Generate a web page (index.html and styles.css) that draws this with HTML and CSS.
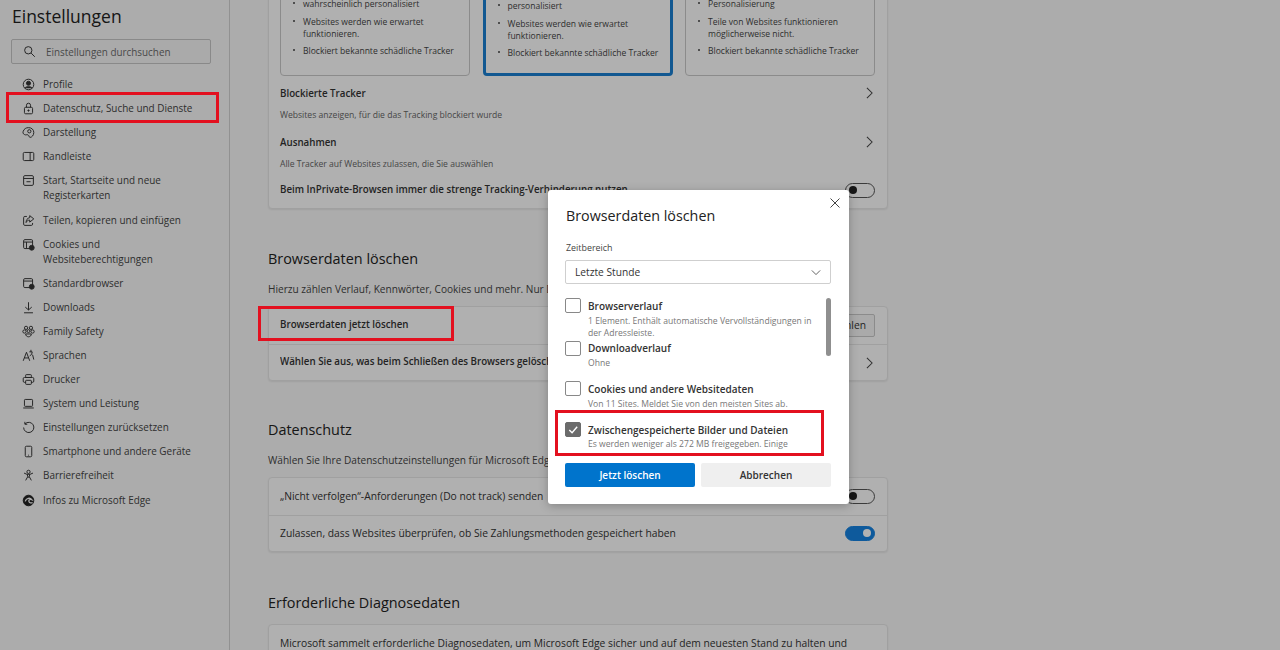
FILE: index.html
```html
<!DOCTYPE html>
<html lang="de">
<head>
  <meta charset="UTF-8">
  <title>Einstellungen</title>
  <link rel="stylesheet" href="styles.css">
</head>
<body>
  <div class="screen">
    <aside class="sidebar">
      <h1>Einstellungen</h1>
      <div class="search">
        <svg class="ico" viewBox="0 0 16 16"><circle cx="6.5" cy="6.5" r="4.5"/><path d="M10 10l4.5 4.5"/></svg>
        <span>Einstellungen durchsuchen</span>
      </div>
      <nav class="nav">
        <a><svg class="ico" viewBox="0 0 16 16"><circle cx="8" cy="8" r="6.5"/><circle cx="8" cy="6.5" r="2.5" class="fill"/><path d="M3.5 12.5c1-2.5 8-2.5 9 0" class="fill"/></svg><span>Profile</span></a>
        <a><svg class="ico" viewBox="0 0 16 16"><rect x="3" y="6.5" width="10" height="8" rx="1.5"/><path d="M5.5 6.5V4a2.5 2.5 0 015 0v2.5"/><circle cx="8" cy="10.5" r=".8" class="fill"/></svg><span>Datenschutz, Suche und Dienste</span></a>
        <a><svg class="ico" viewBox="0 0 16 16"><path d="M8 2c4 0 6.5 2.6 6.5 6 0 3.5-2.5 6-4.5 6-1.5 0-1-2-2.5-3-1.5-.8-3 .5-4.500-.5C1 9.500 1 8 1.500 6.500 2.500 3.500 5 2 8 2z"/><circle cx="9" cy="6.5" r="2"/></svg><span>Darstellung</span></a>
        <a><svg class="ico" viewBox="0 0 16 16"><rect x="1.5" y="3" width="13" height="10" rx="1.5"/><path d="M10 3v10"/></svg><span>Randleiste</span></a>
        <a><svg class="ico" viewBox="0 0 16 16"><rect x="2" y="2" width="12" height="12" rx="1.5"/><path d="M2 5.5h12M5.5 9.5h5"/></svg><span>Start, Startseite und neue<br>Registerkarten</span></a>
        <a><svg class="ico" viewBox="0 0 16 16"><path d="M6 3H3.5A1.5 1.5 0 002 4.5v8A1.5 1.5 0 003.5 14h8a1.5 1.5 0 001.5-1.5V11"/><path d="M9.5 2l5 4-5 4V7.500c-2 0-3.500 1-4.500 3 0-3 1.500-5.500 4.500-6z"/></svg><span>Teilen, kopieren und einfügen</span></a>
        <a><svg class="ico" viewBox="0 0 16 16"><rect x="2" y="2" width="11" height="11" rx="1.5"/><path d="M2 5h11M5.5 5v8"/><circle cx="12" cy="12" r="3" class="fill"/></svg><span>Cookies und<br>Websiteberechtigungen</span></a>
        <a><svg class="ico" viewBox="0 0 16 16"><rect x="2" y="2" width="11" height="11" rx="1.5"/><path d="M2 5h11"/><circle cx="12" cy="12" r="3" class="fill"/></svg><span>Standardbrowser</span></a>
        <a><svg class="ico" viewBox="0 0 16 16"><path d="M8 1.5V11M4 7.5L8 11l4-3.5M2.500 14.500h11"/></svg><span>Downloads</span></a>
        <a><svg class="ico" viewBox="0 0 16 16"><circle cx="5" cy="3.5" r="2"/><circle cx="11" cy="3.5" r="2"/><circle cx="3" cy="8" r="2"/><circle cx="13" cy="8" r="2"/><circle cx="8" cy="7.5" r="1.8"/><path d="M4.5 11h7c0 2-1.500 3.500-3.500 3.500S4.500 13 4.500 11z"/></svg><span>Family Safety</span></a>
        <a><svg class="ico" viewBox="0 0 16 16"><path d="M1.5 14.5L5.5 4l4 10.500M3 11h5M9 3.500h3.500c0 2-1 4-3 5M11 1v2.500M13 7l1.500 6"/></svg><span>Sprachen</span></a>
        <a><svg class="ico" viewBox="0 0 16 16"><rect x="4.5" y="2" width="7" height="3.5" rx=".8"/><path d="M4.500 11.500H3A1.500 1.500 0 011.500 10V7A1.500 1.500 0 013 5.500h10A1.500 1.500 0 0114.500 7v3a1.500 1.500 0 01-1.500 1.500h-1.500"/><rect x="4.5" y="9" width="7" height="5" rx=".8"/></svg><span>Drucker</span></a>
        <a><svg class="ico" viewBox="0 0 16 16"><rect x="3" y="3" width="10" height="8.5" rx="1"/><path d="M1.5 13.5h13"/></svg><span>System und Leistung</span></a>
        <a><svg class="ico" viewBox="0 0 16 16"><path d="M3.8 3.5A6.300 6.300 0 112 8"/><path d="M3.5 1v3h3"/></svg><span>Einstellungen zurücksetzen</span></a>
        <a><svg class="ico" viewBox="0 0 16 16"><rect x="4" y="1.5" width="8" height="13" rx="1.5"/><path d="M7.5 12.5h1"/></svg><span>Smartphone und andere Geräte</span></a>
        <a><svg class="ico" viewBox="0 0 16 16"><circle cx="8" cy="3.5" r="2"/><path d="M2.5 5l3.500 1.500h4L13.500 5M6.500 6.500l.5 3-2.500 4.500M9.500 6.500l-.5 3 2.500 4.500M7 10h2"/></svg><span>Barrierefreiheit</span></a>
        <a><svg class="ico" viewBox="0 0 16 16"><circle cx="8" cy="8" r="6.5" class="solid"/><path d="M4 9c1-4 6-5 8-2-2-1-4 0-3.500 2s3 2.500 4.500 1.500" class="cut"/></svg><span>Infos zu Microsoft Edge</span></a>
      </nav>
    </aside>

    <main class="main">
      <section class="card tracking">
        <div class="levels">
          <div class="level">
            <ul>
              <li>wahrscheinlich personalisiert</li>
              <li>Websites werden wie erwartet funktionieren.</li>
              <li>Blockiert bekannte schädliche Tracker</li>
            </ul>
          </div>
          <div class="level selected">
            <ul>
              <li>personalisiert</li>
              <li>Websites werden wie erwartet funktionieren.</li>
              <li>Blockiert bekannte schädliche Tracker</li>
            </ul>
          </div>
          <div class="level">
            <ul>
              <li>Personalisierung</li>
              <li>Teile von Websites funktionieren möglicherweise nicht.</li>
              <li>Blockiert bekannte schädliche Tracker</li>
            </ul>
          </div>
        </div>
        <div class="link-row">
          <div><strong>Blockierte Tracker</strong><small>Websites anzeigen, für die das Tracking blockiert wurde</small></div>
          <svg class="chev" viewBox="0 0 10 14"><path d="M2 1l6 6-6 6"/></svg>
        </div>
        <div class="link-row">
          <div><strong>Ausnahmen</strong><small>Alle Tracker auf Websites zulassen, die Sie auswählen</small></div>
          <svg class="chev" viewBox="0 0 10 14"><path d="M2 1l6 6-6 6"/></svg>
        </div>
        <div class="link-row last">
          <strong>Beim InPrivate-Browsen immer die strenge Tracking-Verhinderung nutzen</strong>
          <span class="toggle"></span>
        </div>
      </section>

      <h2 class="clear-head">Browserdaten löschen</h2>
      <p class="desc">Hierzu zählen Verlauf, Kennwörter, Cookies und mehr. Nur Daten aus diesem Profil werden gelöscht.</p>
      <section class="card">
        <div class="row">
          <strong>Browserdaten jetzt löschen</strong>
          <button class="pick">Auswählen</button>
        </div>
        <div class="row">
          <strong class="cut-off">Wählen Sie aus, was beim Schließen des Browsers gelöscht werden soll</strong>
          <svg class="chev" viewBox="0 0 10 14"><path d="M2 1l6 6-6 6"/></svg>
        </div>
      </section>

      <h2 class="privacy-head">Datenschutz</h2>
      <p class="desc">Wählen Sie Ihre Datenschutzeinstellungen für Microsoft Edge aus.</p>
      <section class="card">
        <div class="row">
          <span>„Nicht verfolgen“-Anforderungen (Do not track) senden</span>
          <span class="toggle"></span>
        </div>
        <div class="row">
          <span>Zulassen, dass Websites überprüfen, ob Sie Zahlungsmethoden gespeichert haben</span>
          <span class="toggle on"></span>
        </div>
      </section>

      <h2 class="diag-head">Erforderliche Diagnosedaten</h2>
      <section class="card">
        <div class="row">
          <span>Microsoft sammelt erforderliche Diagnosedaten, um Microsoft Edge sicher und auf dem neuesten Stand zu halten und</span>
        </div>
      </section>
    </main>

    <div class="dim"></div>

    <div class="dialog">
      <svg class="close" viewBox="0 0 12 12"><path d="M1.5 1.5l9 9M10.5 1.5l-9 9"/></svg>
      <h3>Browserdaten löschen</h3>
      <label class="range-label">Zeitbereich</label>
      <div class="select">
        <span>Letzte Stunde</span>
        <svg viewBox="0 0 12 8"><path d="M1 1.5l5 5 5-5"/></svg>
      </div>
      <div class="options">
        <div class="option">
          <span class="box"></span>
          <div><b>Browserverlauf</b><small>1 Element. Enthält automatische Vervollständigungen in der Adressleiste.</small></div>
        </div>
        <div class="option download">
          <span class="box"></span>
          <div><b>Downloadverlauf</b><small>Ohne</small></div>
        </div>
        <div class="option cookies">
          <span class="box"></span>
          <div><b>Cookies und andere Websitedaten</b><small>Von 11 Sites. Meldet Sie von den meisten Sites ab.</small></div>
        </div>
        <div class="option cache">
          <span class="box checked"><svg viewBox="0 0 14 14"><path d="M3 7.5l3 3 5.5-6.5"/></svg></span>
          <div><b>Zwischengespeicherte Bilder und Dateien</b><small>Es werden weniger als 272 MB freigegeben. Einige</small></div>
        </div>
        <span class="thumb"></span>
      </div>
      <div class="actions">
        <button class="primary">Jetzt löschen</button>
        <button class="secondary">Abbrechen</button>
      </div>
    </div>

    <div class="mark mark-nav"></div>
    <div class="mark mark-row"></div>
    <div class="mark mark-cache"></div>
  </div>
</body>
</html>
```

FILE: styles.css
```css
* { box-sizing: border-box; }
html, body { margin: 0; padding: 0; }

body {
  background: #f7f7f7;
  font-family: "Open Sans", "Noto Sans", Arial, sans-serif;
  color: #333;
  overflow: hidden;
}

.screen {
  position: relative;
  display: flex;
  width: 1280px;
  height: 650px;
  overflow: hidden;
}

/* Sidebar */
.sidebar {
  flex: 0 0 230px;
  border-right: 1px solid #d0d0d0;
  padding: 4px 18px 0 11px;
}

.sidebar h1 {
  margin: 0 0 11px 1px;
  font-size: 17.5px;
  line-height: 24px;
  font-weight: 400;
  color: #222;
}

.search {
  display: flex;
  align-items: center;
  gap: 10px;
  height: 25px;
  padding-left: 11px;
  border: 1px solid #c4c4c4;
  border-radius: 2px;
  background: #f4f4f4;
  font-size: 9.9px;
  color: #6a6a6a;
}

.ico {
  flex: none;
  width: 13px;
  height: 13px;
  fill: none;
  stroke: #333;
  stroke-width: 1.2;
}
.ico .fill { fill: #333; }
.ico .solid { fill: #222; stroke: #222; }
.ico .cut { stroke: #f7f7f7; stroke-width: 1.6; }

.nav { margin-top: 8.5px; }

.nav a {
  display: flex;
  align-items: flex-start;
  gap: 8px;
  padding: 4.56px 0 4.56px 11px;
  font-size: 9.93px;
  line-height: 15px;
  color: #444;
}
.nav .ico { margin-top: 1px; }

/* Main column */
.main {
  flex: 0 0 620px;
  margin-left: 38px;
  margin-top: -56px;
}

.card {
  border: 1px solid #e6e6e6;
  border-radius: 4px;
  background: #fcfcfc;
  box-shadow: 0 1px 2px rgba(0,0,0,.08);
  font-size: 10.3px;
}

.tracking { padding: 0 12px 0 11px; height: 265px; }

.levels {
  display: flex;
  justify-content: space-between;
  height: 131px;
}

.level {
  width: 190px;
  padding: 52px 4px 0 12px;
  border: 1px solid #c8c8c8;
  border-radius: 4px;
}
.level.selected { border: 3px solid #1a7fd0; }

.level ul { margin: 0; padding: 0; list-style: none; }
.level li {
  position: relative;
  padding-left: 10px;
  margin-bottom: 5.5px;
  font-size: 8.55px;
  line-height: 12px;
  color: #444;
}
.level li::before {
  content: "";
  position: absolute;
  left: 0;
  top: 4px;
  width: 2px;
  height: 2px;
  border-radius: 50%;
  background: #444;
}

.link-row {
  display: flex;
  justify-content: space-between;
  align-items: flex-start;
  height: 48.5px;
  padding-top: 10px;
}
.link-row.last { align-items: center; padding-top: 0; height: 34px; }

.link-row strong, .row strong { font-weight: 600; font-size: 9.75px; line-height: 14px; color: #333; }
.link-row small {
  display: block;
  margin-top: 8px;
  font-size: 8.6px;
  line-height: 12px;
  color: #666;
}

.chev {
  flex: none;
  width: 9px;
  height: 12px;
  fill: none;
  stroke: #444;
  stroke-width: 1.2;
  margin: 1px 1px 0 0;
}

.toggle {
  flex: none;
  position: relative;
  width: 30px;
  height: 15px;
  border: 1px solid #555;
  border-radius: 8px;
}
.toggle::after {
  content: "";
  position: absolute;
  left: 3px;
  top: 2.5px;
  width: 8px;
  height: 8px;
  border-radius: 50%;
  background: #222;
}
.toggle.on { background: #1582e0; border-color: #1582e0; }
.toggle.on::after { left: auto; right: 3px; background: #fff; }

h2 {
  margin: 0;
  font-size: 14.4px;
  line-height: 20px;
  font-weight: 400;
  color: #222;
}
.clear-head { margin-top: 40px; }
.privacy-head { margin-top: 39px; }
.diag-head { margin-top: 41px; margin-bottom: 11px; }

.desc {
  margin: 13px 0 10px;
  font-size: 10.1px;
  line-height: 14px;
  color: #444;
  white-space: nowrap;
}

.row {
  display: flex;
  justify-content: space-between;
  align-items: center;
  height: 36.5px;
  padding: 0 12px 0 11px;
  color: #333;
  white-space: nowrap;
}
.row + .row { border-top: 1px solid #e6e6e6; }

.cut-off { width: 280px; overflow: hidden; }

.pick {
  height: 23px;
  padding: 0 8px;
  border: 1px solid #c8c8c8;
  border-radius: 2px;
  background: #f4f4f4;
  font: inherit;
  color: #333;
}

/* Overlay and dialog */
.dim {
  position: absolute;
  inset: 0;
  background: rgba(0,0,0,.3);
}

.dialog {
  position: absolute;
  left: 548px;
  top: 190px;
  width: 301px;
  height: 314px;
  padding: 16px 18px 0 17px;
  background: #fff;
  border-radius: 3px;
  box-shadow: 0 2px 10px rgba(0,0,0,.25);
}

.close {
  position: absolute;
  right: 8px;
  top: 7px;
  width: 12px;
  height: 12px;
  fill: none;
  stroke: #444;
  stroke-width: 1;
}

.dialog h3 {
  margin: 0 0 0 1px;
  font-size: 14.3px;
  line-height: 19px;
  font-weight: 400;
  color: #222;
}

.range-label {
  display: block;
  margin: 17px 0 0 1px;
  font-size: 8.9px;
  line-height: 12px;
  color: #444;
}

.select {
  display: flex;
  justify-content: space-between;
  align-items: center;
  height: 24px;
  margin-top: 6px;
  padding: 0 9px;
  border: 1px solid #cfcfcf;
  border-radius: 2px;
  font-size: 10.2px;
  color: #333;
}
.select svg {
  width: 10px;
  height: 7px;
  fill: none;
  stroke: #444;
  stroke-width: 1;
}

.options {
  position: relative;
  height: 154px;
  margin-top: 14px;
  overflow: hidden;
}

.option {
  display: flex;
  gap: 7px;
  position: relative;
}
.option > div { padding-top: 1px; }
.option.download { margin-top: 2px; }
.option.download > div { padding-top: 0; }
.option.cookies { margin-top: 12px; }
.option.cache { margin-top: 12px; }
.option.cache small { margin-top: 0; }

.box {
  flex: none;
  display: block;
  width: 16px;
  height: 15px;
  border: 1px solid #888;
  border-radius: 2px;
}
.box.checked { background: #6b6b6b; border-color: #6b6b6b; }
.box svg { display: block; width: 14px; height: 13px; fill: none; stroke: #fff; stroke-width: 1.5; }

.option b {
  display: block;
  font-size: 10px;
  line-height: 15px;
  font-weight: 600;
  color: #333;
}
.option small {
  display: block;
  width: 234px;
  margin-top: 1px;
  font-size: 8.6px;
  line-height: 12px;
  color: #777;
}

.thumb {
  position: absolute;
  right: 0;
  top: 0;
  width: 5px;
  height: 58px;
  border-radius: 3px;
  background: #8f8f8f;
}

.actions {
  display: flex;
  justify-content: space-between;
  margin-top: 11px;
}
.actions button {
  width: 130px;
  height: 24px;
  border: 0;
  border-radius: 2px;
  font-family: inherit;
  font-size: 10px;
  font-weight: 600;
}
.primary { background: #0074cc; color: #fff; }
.secondary { background: #efefef; color: #333; }

/* Red annotation boxes */
.mark {
  position: absolute;
  border: 3px solid #e3101f;
}
.mark-nav { left: 6px; top: 92px; width: 213px; height: 31px; }
.mark-row { left: 258px; top: 306px; width: 196px; height: 35px; }
.mark-cache { left: 555px; top: 410px; width: 269px; height: 46px; }
```
